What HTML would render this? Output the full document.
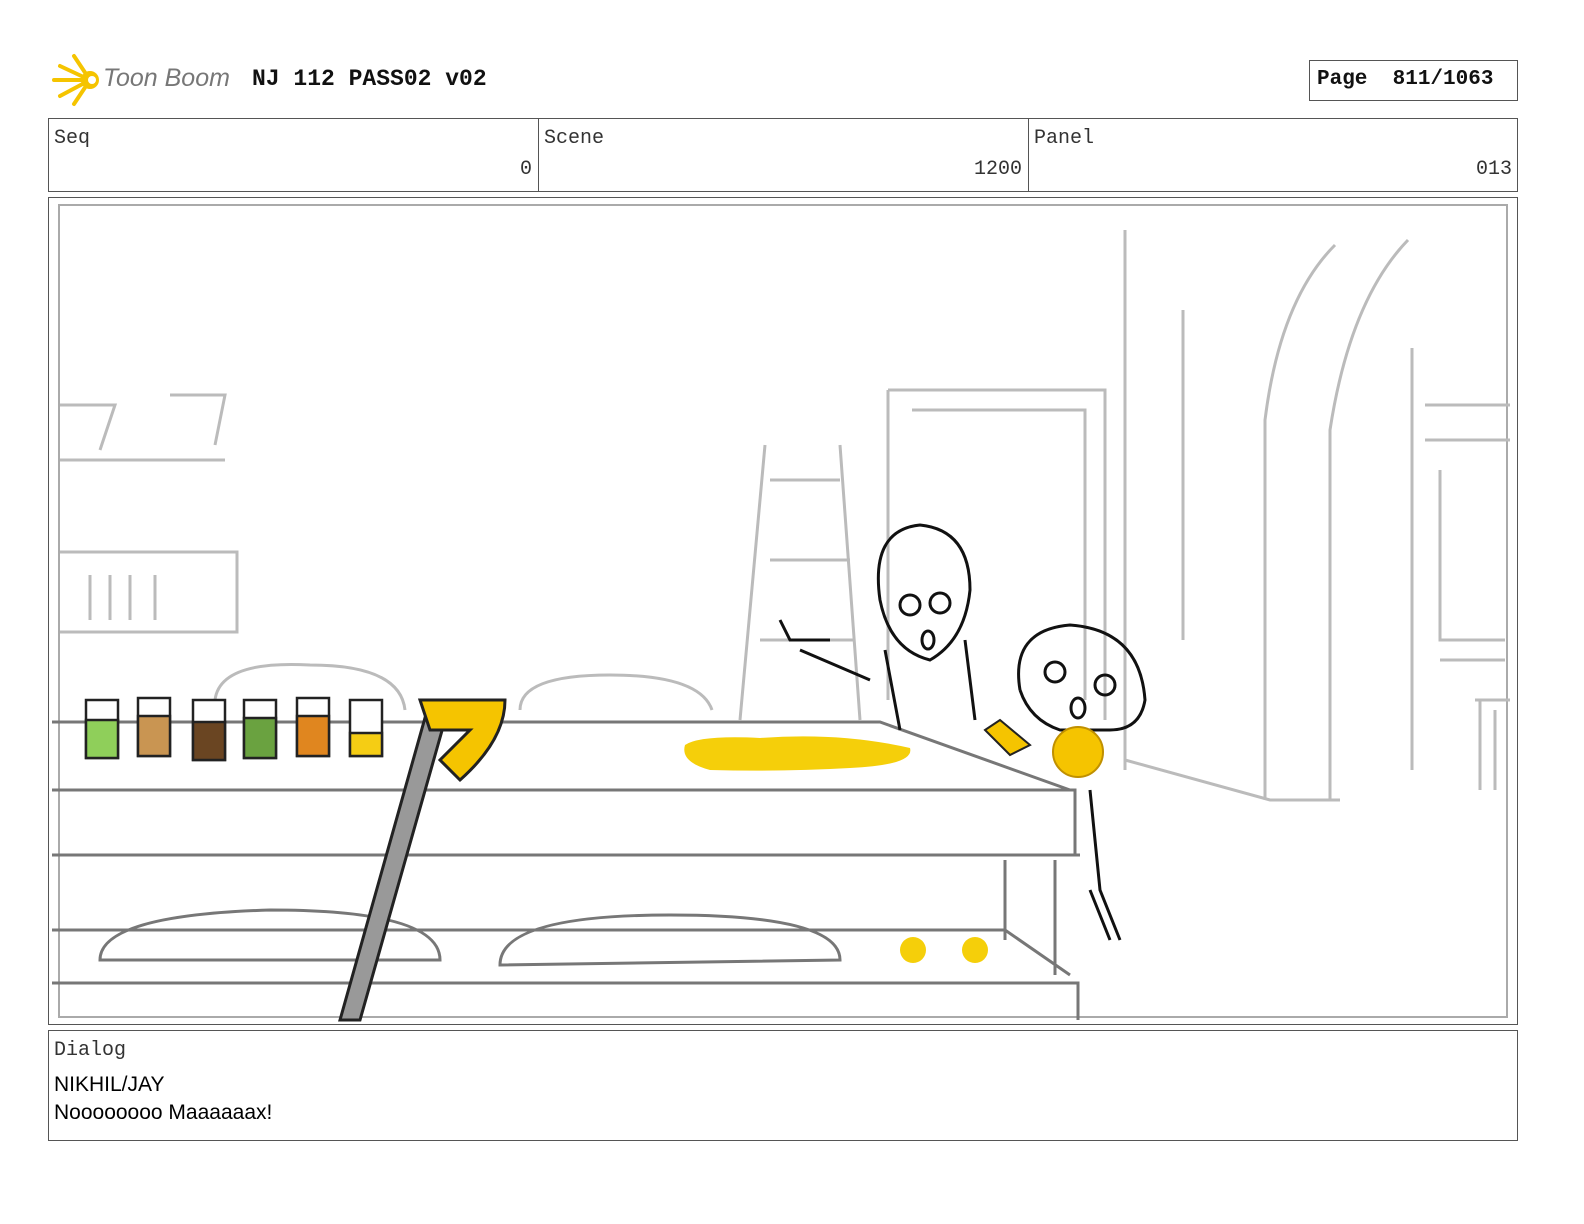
<!DOCTYPE html>
<html><head><style>
body{margin:0;width:1584px;height:1224px;background:#fff;position:relative;overflow:hidden;font-family:"Liberation Mono",monospace}
.a{position:absolute}
.box{position:absolute;border:1px solid #555;box-sizing:border-box}
.lbl{font-size:20px;color:#333}
</style></head><body>
<svg class="a" style="left:50px;top:52px" width="56" height="56" viewBox="0 0 56 56">
<g stroke="#f5c400" stroke-width="4" stroke-linecap="round">
<line x1="40" y1="28" x2="4" y2="28"/><line x1="40" y1="28" x2="10" y2="14"/><line x1="40" y1="28" x2="10" y2="44"/>
<line x1="40" y1="28" x2="24" y2="4"/><line x1="40" y1="28" x2="24" y2="52"/></g>
<circle cx="40" cy="28" r="9" fill="#f5c400"/><circle cx="42" cy="28" r="4" fill="#fff"/></svg>
<div class="a" style="left:103px;top:64px;font:italic 25px 'Liberation Sans',sans-serif;color:#777">Toon Boom</div>
<div class="a" style="left:252px;top:66px;font-weight:bold;font-size:23px;color:#111">NJ 112 PASS02 v02</div>
<div class="box" style="left:1309px;top:60px;width:209px;height:41px;font-weight:bold;font-size:21px;padding:7px 0 0 7px;color:#111">Page&nbsp; 811/1063</div>
<div class="box" style="left:48px;top:118px;width:1470px;height:74px"></div>
<div class="a" style="left:538px;top:118px;width:1px;height:74px;background:#555"></div>
<div class="a" style="left:1028px;top:118px;width:1px;height:74px;background:#555"></div>
<div class="a lbl" style="left:54px;top:127px">Seq</div>
<div class="a lbl" style="left:544px;top:127px">Scene</div>
<div class="a lbl" style="left:1034px;top:127px">Panel</div>
<div class="a lbl" style="left:300px;width:232px;text-align:right;top:158px">0</div>
<div class="a lbl" style="left:790px;width:232px;text-align:right;top:158px">1200</div>
<div class="a lbl" style="left:1280px;width:232px;text-align:right;top:158px">013</div>
<div class="box" style="left:48px;top:197px;width:1470px;height:828px"></div>
<svg class="a" style="left:0;top:0" width="1584" height="1224">
<rect x="59" y="205" width="1448" height="812" fill="none" stroke="#aaa" stroke-width="2"/>
<g fill="none" stroke="#bbb" stroke-width="3">
<path d="M1125 230V770M1265 800V420Q1280 300 1335 245M1330 800V430Q1350 300 1408 240M1412 348V770M1125 760L1270 800H1340"/>
<path d="M888 390H1105V720M888 390V700M912 410H1085V700M765 445L740 720M840 445L860 720M770 480H840M770 560H850M760 640H855"/>
<path d="M60 460H225M60 405H115L100 450M170 395H225L215 445M60 552H237V632H60M90 575V620M110 575V620M130 575V620M155 575V620"/>
<path d="M1425 405H1510M1425 440H1510M1440 470V640H1505M1440 660H1505M1475 700H1510M1480 700V790M1495 710V790"/>
<path d="M1183 310V640M215 700Q220 660 310 665Q400 665 405 710M520 710Q520 675 610 675Q700 675 712 710"/>
</g>
<g fill="none" stroke="#777" stroke-width="3">
<path d="M52 722H880L1070 790M52 790H1075V855M52 855H1080M1005 860V940M1055 860V975M52 930H1005L1070 975M52 983H1078V1020"/>
<path d="M100 960Q100 915 270 910Q440 910 440 960ZM500 965Q500 915 670 915Q840 915 840 960Z"/>
</g>
<path d="M430 700L340 1020H360L445 720" fill="#999" stroke="#222" stroke-width="3"/>
<path d="M420 700L505 700Q505 740 460 780L440 760L470 730H430Z" fill="#f5c400" stroke="#222" stroke-width="3"/>
<path d="M685 745Q700 735 760 738Q840 732 910 748Q915 765 850 768Q780 772 710 770Q680 762 685 745Z" fill="#f5cf0a"/>
<circle cx="913" cy="950" r="13" fill="#f5cf0a"/><circle cx="975" cy="950" r="13" fill="#f5cf0a"/>
<g stroke="#222" stroke-width="2.5">
<rect x="86" y="700" width="32" height="58" fill="#fff"/><rect x="86" y="720" width="32" height="38" fill="#8fcf5a"/>
<rect x="138" y="698" width="32" height="58" fill="#fff"/><rect x="138" y="716" width="32" height="40" fill="#c99552"/>
<rect x="193" y="700" width="32" height="60" fill="#fff"/><rect x="193" y="722" width="32" height="38" fill="#6a4522"/>
<rect x="244" y="700" width="32" height="58" fill="#fff"/><rect x="244" y="718" width="32" height="40" fill="#6aa240"/>
<rect x="297" y="698" width="32" height="58" fill="#fff"/><rect x="297" y="716" width="32" height="40" fill="#e0861f"/>
<rect x="350" y="700" width="32" height="56" fill="#fff"/><rect x="350" y="733" width="32" height="23" fill="#f5cd14"/>
</g>
<g fill="none" stroke="#111" stroke-width="3">
<path d="M880 600Q870 530 920 525Q970 530 970 590Q965 640 930 660Q890 650 880 600M885 650L900 730M965 640L975 720M870 680L800 650M780 620L790 640L830 640"/>
<circle cx="910" cy="605" r="10"/><circle cx="940" cy="603" r="10"/><ellipse cx="928" cy="640" rx="6" ry="9"/>
<path d="M1020 690Q1010 630 1070 625Q1140 630 1145 700Q1140 730 1110 730L1060 730Q1030 720 1020 690"/>
<circle cx="1055" cy="672" r="10"/><circle cx="1105" cy="685" r="10"/><ellipse cx="1078" cy="708" rx="7" ry="10"/>
<path d="M1090 790L1100 890L1120 940M1090 890L1110 940"/>
</g>
<circle cx="1078" cy="752" r="25" fill="#f5c400" stroke="#c09000" stroke-width="2"/>
<path d="M985 730L1000 720L1030 745L1010 755Z" fill="#f5c400" stroke="#222" stroke-width="2"/>
</svg>
<div class="box" style="left:48px;top:1030px;width:1470px;height:111px"></div>
<div class="a lbl" style="left:54px;top:1039px">Dialog</div>
<div class="a" style="left:54px;top:1071px;font:21px 'Liberation Sans',sans-serif;color:#000;line-height:28px">NIKHIL/JAY<br>Noooooooo Maaaaaax!</div>
</body></html>
